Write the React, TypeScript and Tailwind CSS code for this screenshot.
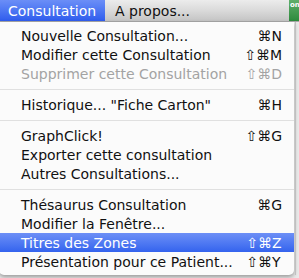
import React from "react";

type Item =
  | { kind: "item"; label: string; mods?: string; key?: string; disabled?: boolean; active?: boolean }
  | { kind: "sep" };

const items: Item[] = [
  { kind: "item", label: "Nouvelle Consultation...", mods: "⌘", key: "N" },
  { kind: "item", label: "Modifier cette Consultation", mods: "⇧⌘", key: "M" },
  { kind: "item", label: "Supprimer cette Consultation", mods: "⇧⌘", key: "D", disabled: true },
  { kind: "sep" },
  { kind: "item", label: 'Historique... "Fiche Carton"', mods: "⌘", key: "H" },
  { kind: "sep" },
  { kind: "item", label: "GraphClick!", mods: "⇧⌘", key: "G" },
  { kind: "item", label: "Exporter cette consultation" },
  { kind: "item", label: "Autres Consultations..." },
  { kind: "sep" },
  { kind: "item", label: "Thésaurus Consultation", mods: "⌘", key: "G" },
  { kind: "item", label: "Modifier la Fenêtre..." },
  { kind: "item", label: "Titres des Zones", mods: "⇧⌘", key: "Z", active: true },
  { kind: "item", label: "Présentation pour ce Patient...", mods: "⇧⌘", key: "Y" },
];

export default function App() {
  return (
    <div
      className="relative w-[299px] h-[278px] overflow-hidden bg-[#e9e9e9] text-[14px] leading-none"
      style={{ fontFamily: '"DejaVu Sans", "Noto Sans", sans-serif' }}
    >
      {/* menu bar */}
      <div className="flex h-[22px] w-full bg-gradient-to-b from-[#ececec] via-[#dadada] to-[#c4c4c4] border-b border-[#a8a8a8]">
        <div className="flex items-center h-full w-[105px] pl-[8px] text-white bg-gradient-to-b from-[#6b8ef7] to-[#2f5ced]">
          Consultation
        </div>
        <div className="flex items-center h-full flex-1 pl-[10px] text-[#111]">A propos...</div>
        <div className="h-full w-[10px] bg-gradient-to-b from-[#5fae6a] to-[#2c8a3c] flex items-start pt-[2px] pl-[1px]">
          <span className="text-[7px] text-white font-bold">on</span>
        </div>
      </div>

      <div className="flex">
        {/* menu */}
        <div className="w-[295px] bg-[#fbfbfb] rounded-b-[5px] pt-[4px] pb-[4px] shadow-[0_2px_4px_rgba(0,0,0,0.35)] -ml-[1px] pl-[1px]">
          {items.map((it, i) =>
            it.kind === "sep" ? (
              <div key={i} className="h-[12px] flex items-center">
                <div className="h-px w-full bg-[#e0e0e0]" />
              </div>
            ) : (
              <div
                key={i}
                className={
                  "h-[19px] flex items-center pl-[21px] pr-[12px] " +
                  (it.active
                    ? "bg-gradient-to-b from-[#6d8ff6] to-[#3463ee] text-white"
                    : it.disabled
                    ? "text-[#a3a3a3]"
                    : "text-[#111]")
                }
              >
                <span className="flex-1 whitespace-nowrap">{it.label}</span>
                {it.key && (
                  <span className="whitespace-nowrap flex items-center">
                    <span>{it.mods}</span>
                    <span className="inline-block min-w-[10px]">{it.key}</span>
                  </span>
                )}
              </div>
            )
          )}
        </div>
        <div className="flex-1 border-l border-[#c0c0c0] ml-[1px]" />
      </div>
    </div>
  );
}
